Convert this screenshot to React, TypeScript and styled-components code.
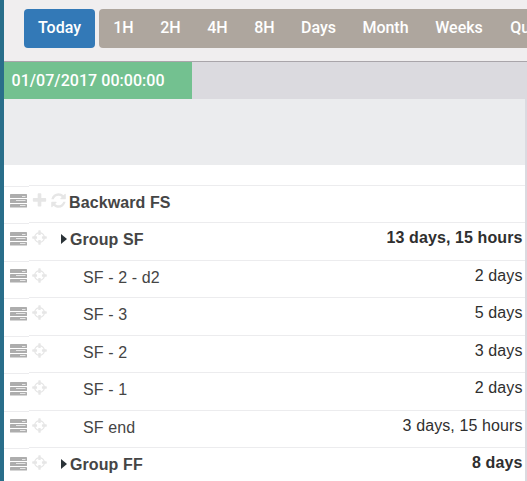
import React from 'react';
import styled, { createGlobalStyle } from 'styled-components';

const GlobalStyle = createGlobalStyle`
  * { box-sizing: border-box; }
  body { margin: 0; background: #fff; overflow: hidden; }
`;

const Page = styled.div`
  width: 527px;
  height: 481px;
  overflow: hidden;
  display: flex;
  flex-direction: column;
  border-left: 4px solid #296e8a;
  font-family: Roboto, sans-serif;
  background: #fff;
`;

const Toolbar = styled.div`
  flex: none;
  height: 62px;
  padding: 9px 0 0 20px;
  display: flex;
  align-items: flex-start;
  gap: 4px;
  background: #f0eeef;
  border-bottom: 1px solid #a9a5aa;
`;

const ButtonGroup = styled.div`
  flex: none;
  display: flex;
  height: 39px;
  padding-left: 1px;
  background: #aea69e;
  border-radius: 4px;
`;

const Button = styled.button<{ $width: number; $primary?: boolean }>`
  flex: none;
  width: ${p => p.$width}px;
  height: 39px;
  padding: 0 0 2px;
  border: 0;
  border-radius: 4px;
  background: ${p => (p.$primary ? '#3379b7' : 'transparent')};
  color: #fff;
  font: 500 16px/37px Roboto, sans-serif;
  text-align: center;
  white-space: nowrap;
`;

const DateBar = styled.div`
  flex: none;
  height: 37px;
  background: #dbdadf;
`;

const DateLabel = styled.div`
  width: 188px;
  height: 37px;
  padding-left: 7.5px;
  background: #73c190;
  color: #fff;
  font: 500 16px/38px Roboto, sans-serif;
  letter-spacing: 0.05px;
  white-space: nowrap;
`;

const Panel = styled.div`
  flex: 1;
  border-right: 2px solid #dbdae0;
`;

const PanelHead = styled.div`
  height: 66px;
  margin-bottom: 20px;
  background: #ebecee;
`;

const Row = styled.div<{ $height: number }>`
  display: flex;
  height: ${p => p.$height}px;
`;

const HandleCell = styled.div<{ $top: number }>`
  flex: none;
  width: 25px;
  height: calc(100% - 1px);
  margin-top: 1px;
  border-top: 1px solid #ececee;
  padding: ${p => p.$top}px 0 0 6px;
  color: #adadad;
`;

const MainCell = styled.div`
  flex: 1;
  display: flex;
  align-items: flex-start;
  padding: 1px 2.5px 0 3px;
  border-top: 1px solid #ececee;
  font: 16px/18px "Liberation Sans", Arial, sans-serif;
`;

const Actions = styled.div<{ $width: number }>`
  flex: none;
  display: flex;
  gap: 2px;
  width: ${p => p.$width}px;
  padding-top: 5px;
  margin-left: -1px;
  color: #e6e6e6;
`;

const Caret = styled.span`
  flex: none;
  width: 0;
  height: 0;
  margin: 10px 3px 0 -1px;
  border-left: 6px solid #2b3338;
  border-top: 5px solid transparent;
  border-bottom: 5px solid transparent;
`;

const Name = styled.span<{ $bold?: boolean }>`
  flex: 1;
  padding-top: 7px;
  color: #454545;
  font-weight: ${p => (p.$bold ? 700 : 400)};
  letter-spacing: 0.1px;
`;

const Duration = styled.span<{ $bold?: boolean }>`
  padding-top: 5px;
  color: #2f2f2f;
  font-weight: ${p => (p.$bold ? 700 : 400)};
  letter-spacing: 0.1px;
`;

const Svg = styled.svg`
  display: block;
  flex: none;
  fill: currentColor;
`;

const paths = {
  crosshairs: 'M1325 1024h-109q-26 0-45-19t-19-45v-128q0-26 19-45t45-19h109q-32-108-112.5-188.5t-188.5-112.5v109q0 26-19 45t-45 19h-128q-26 0-45-19t-19-45v-109q-108 32-188.5 112.5t-112.5 188.5h109q26 0 45 19t19 45v128q0 26-19 45t-45 19h-109q32 108 112.5 188.5t188.5 112.5v-109q0-26 19-45t45-19h128q26 0 45 19t19 45v109q108-32 188.5-112.5t112.5-188.5zm339-192v128q0 26-19 45t-45 19h-143q-37 161-154.5 278.5t-278.5 154.5v143q0 26-19 45t-45 19h-128q-26 0-45-19t-19-45v-143q-161-37-278.5-154.5t-154.5-278.5h-143q-26 0-45-19t-19-45v-128q0-26 19-45t45-19h143q37-161 154.5-278.5t278.5-154.5v-143q0-26 19-45t45-19h128q26 0 45 19t19 45v143q161 37 278.5 154.5t154.5 278.5h143q26 0 45 19t19 45z',
  plus: 'M1600 736v192q0 40-28 68t-68 28h-416v416q0 40-28 68t-68 28h-192q-40 0-68-28t-28-68v-416h-416q-40 0-68-28t-28-68v-192q0-40 28-68t68-28h416v-416q0-40 28-68t68-28h192q40 0 68 28t28 68v416h416q40 0 68 28t28 68z',
  refresh: 'M1639 1056q0 5-1 7-64 268-268 434.5t-478 166.5q-146 0-282.5-55t-243.5-157l-129 129q-19 19-45 19t-45-19-19-45v-448q0-26 19-45t45-19h448q26 0 45 19t19 45-19 45l-137 137q71 66 161 102t187 36q134 0 250-65t186-179q11-17 53-117 8-23 30-23h192q13 0 22.5 9.5t9.5 22.5zm25-800v448q0 26-19 45t-45 19h-448q-26 0-45-19t-19-45 19-45l138-138q-148-137-349-137-134 0-250 65t-186 179q-11 17-53 117-8 23-30 23h-199q-13 0-22.5-9.5t-9.5-22.5v-7q65-268 270-434.5t480-166.5q146 0 284 55.5t245 156.5l130-129q19-19 45-19t45 19 19 45z',
};

const Icon = ({ name }: { name: keyof typeof paths }) => (
  <Svg width="17" height="17" viewBox="0 0 1792 1792" aria-hidden="true">
    <path d={paths[name]} />
  </Svg>
);

/* Three stacked bars, each with a light progress slot on the right. */
const TasksIcon = () => (
  <Svg width="17" height="14" viewBox="0 0 17 14" aria-hidden="true">
    <rect width="17" height="4" rx="0.6" />
    <rect y="5" width="17" height="4" rx="0.6" />
    <rect y="10" width="17" height="3.6" rx="0.6" />
    <path fill="#e6e6e6" d="M12 2h3.5v1h-3.5zM6 6h9.5v1h-9.5zM10 11h5.5v1h-5.5z" />
  </Svg>
);

type Task = { name: string; duration?: string; kind: 'root' | 'group' | 'task' };

const tasks: Task[] = [
  { name: 'Backward FS', kind: 'root' },
  { name: 'Group SF', duration: '13 days, 15 hours', kind: 'group' },
  { name: 'SF - 2 - d2', duration: '2 days', kind: 'task' },
  { name: 'SF - 3', duration: '5 days', kind: 'task' },
  { name: 'SF - 2', duration: '3 days', kind: 'task' },
  { name: 'SF - 1', duration: '2 days', kind: 'task' },
  { name: 'SF end', duration: '3 days, 15 hours', kind: 'task' },
  { name: 'Group FF', duration: '8 days', kind: 'group' },
];

const actionWidth = { root: 38, group: 31, task: 52 };

const scales: [string, number][] = [
  ['1H', 47], ['2H', 47], ['4H', 47], ['8H', 47],
  ['Days', 61], ['Month', 73], ['Weeks', 74], ['Quarters', 91],
];

export default function App() {
  return (
    <>
      <GlobalStyle />
      <Page>
        <Toolbar>
          <Button $width={71} $primary>Today</Button>
          <ButtonGroup>
            {scales.map(([label, width]) => (
              <Button key={label} $width={width}>{label}</Button>
            ))}
          </ButtonGroup>
        </Toolbar>
        <DateBar>
          <DateLabel>01/07/2017 00:00:00</DateLabel>
        </DateBar>
        <Panel>
          <PanelHead />
          {tasks.map((task, i) => (
            <Row key={task.name} $height={i % 2 ? 38 : 37}>
              <HandleCell $top={i % 2 ? 8 : 7}>
                <TasksIcon />
              </HandleCell>
              <MainCell>
                <Actions $width={actionWidth[task.kind]}>
                  <Icon name={task.kind === 'root' ? 'plus' : 'crosshairs'} />
                  {task.kind === 'root' && <Icon name="refresh" />}
                </Actions>
                {task.kind === 'group' && <Caret />}
                <Name $bold={task.kind !== 'task'}>{task.name}</Name>
                {task.duration && <Duration $bold={task.kind === 'group'}>{task.duration}</Duration>}
              </MainCell>
            </Row>
          ))}
        </Panel>
      </Page>
    </>
  );
}
